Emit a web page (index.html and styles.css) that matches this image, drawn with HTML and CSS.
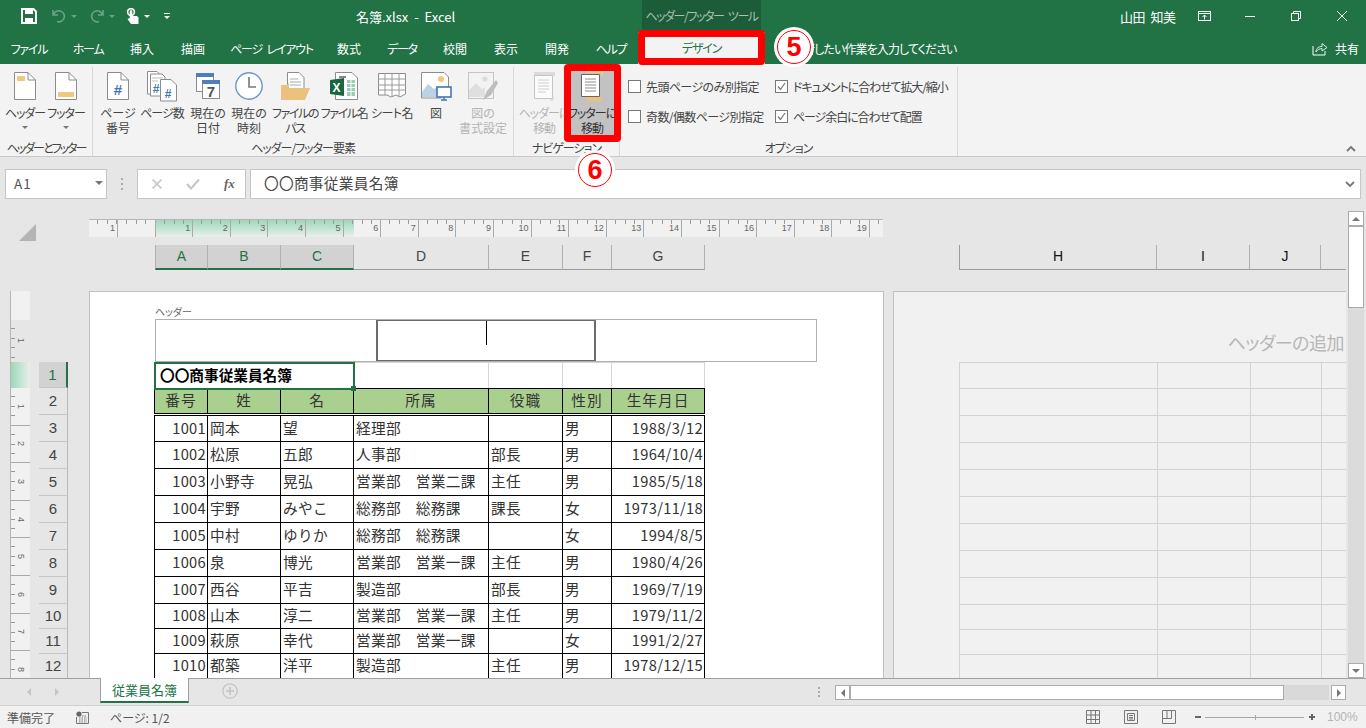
FILE: index.html
```html
<!DOCTYPE html>
<html lang="ja">
<head>
    <meta charset="UTF-8">
    <title>名簿.xlsx - Excel</title>
    <link rel="stylesheet" href="styles.css">
</head>
<body>
<div class="app">
    <!-- title bar -->
    <header class="titlebar">
        <div class="qat">
            <svg class="qat-save" width="16" height="16" viewBox="0 0 16 16"><path d="M1 1H12.5L15 3.5V15H1Z" fill="none" stroke="#fff" stroke-width="2"/><rect x="4" y="1" width="8" height="5" fill="#fff"/><rect x="4" y="10" width="8" height="5" fill="#fff"/></svg>
            <svg class="qat-undo" width="14" height="14" viewBox="0 0 14 14"><path d="M1 1V6H6M1.5 6A5.5 5.5 0 1 1 5 12.5" fill="none" stroke="#6aa287" stroke-width="1.6"/></svg>
            <span class="qat-caret dim"></span>
            <svg class="qat-redo" width="14" height="14" viewBox="0 0 14 14"><path d="M13 1V6H8M12.5 6A5.5 5.5 0 1 0 9 12.5" fill="none" stroke="#6aa287" stroke-width="1.6"/></svg>
            <span class="qat-caret dim"></span>
            <svg class="qat-touch" width="13" height="17" viewBox="0 0 13 17"><circle cx="5" cy="4" r="3.4" fill="none" stroke="#fff" stroke-width="1.6"/><path d="M3.7 3.5a1.3 1.3 0 0 1 2.6 0V8H11l1.5 1.5V16H5L1.5 11 3.7 10Z" fill="#fff"/></svg>
            <span class="qat-caret"></span>
            <svg class="qat-more" width="8" height="8" viewBox="0 0 8 8"><path d="M1 1.5H7" stroke="#fff"/><path d="M1 4H7L4 7Z" fill="#fff"/></svg>
        </div>
        <div class="doc-title">名簿.xlsx&nbsp; - &nbsp;Excel</div>
        <div class="context-title">ヘッダー/フッター ツール</div>
        <div class="user">山田 知美</div>
        <div class="win-btns">
            <svg width="46" height="14" viewBox="0 0 46 14"><g fill="none" stroke="#fff"><rect x="17.5" y="2.5" width="12" height="9"/><path d="M17.5 4.5H29.5M23.5 10.5V6M21.5 8L23.5 6L25.5 8"/></g></svg>
            <svg width="46" height="14" viewBox="0 0 46 14"><path d="M18 7.5H28" stroke="#fff"/></svg>
            <svg width="46" height="14" viewBox="0 0 46 14"><g fill="none" stroke="#fff"><rect x="18.5" y="4.5" width="7" height="7"/><path d="M20.5 4.5V2.5H27.5V9.5H25.5"/></g></svg>
            <svg width="46" height="14" viewBox="0 0 46 14"><path d="M18 2L28 12M28 2L18 12" stroke="#fff" fill="none"/></svg>
        </div>
    </header>

    <!-- tab row -->
    <nav class="tabs">
        <span class="tab kana tab-file">ファイル</span>
        <span class="tab kana tab-home">ホーム</span>
        <span class="tab tab-insert">挿入</span>
        <span class="tab tab-draw">描画</span>
        <span class="tab kana tab-layout">ページ レイアウト</span>
        <span class="tab tab-formula">数式</span>
        <span class="tab kana tab-data">データ</span>
        <span class="tab tab-review">校閲</span>
        <span class="tab tab-view">表示</span>
        <span class="tab tab-dev">開発</span>
        <span class="tab kana tab-help">ヘルプ</span>
        <span class="tab kana tab-design">デザイン</span>
        <span class="tell-me">実行したい作業を入力してください</span>
        <span class="share">
            <svg width="16" height="15" viewBox="0 0 16 15"><path d="M1 5V14H13V10" fill="none" stroke="#fff"/><path d="M4 11C4 7 7 5.5 10 5.5V2.5L15 6.5L10 10V7.5C8 7.5 5.5 8.5 4 11Z" fill="none" stroke="#e3efe8"/></svg>
            共有
        </span>
    </nav>

    <!-- ribbon -->
    <section class="ribbon">
        <div class="group group-hf">
            <div class="buttons">
                <div class="btn w40">
                    <svg width="32" height="32" viewBox="0 0 32 32"><path d="M5.5 2.5H19L26.5 10V29.5H5.5Z" fill="#fff" stroke="#8c8c8c"/><path d="M19 2.5V10H26.5" fill="none" stroke="#8c8c8c"/><rect x="8" y="6" width="8" height="5" fill="#f0c77e"/></svg>
                    <span class="btn-label tight">ヘッダー</span><i class="caret"></i>
                </div>
                <div class="btn w42">
                    <svg width="32" height="32" viewBox="0 0 32 32"><path d="M5.5 2.5H19L26.5 10V29.5H5.5Z" fill="#fff" stroke="#8c8c8c"/><path d="M19 2.5V10H26.5" fill="none" stroke="#8c8c8c"/><rect x="8" y="22" width="16" height="5" fill="#f0c77e"/></svg>
                    <span class="btn-label tight">フッター</span><i class="caret"></i>
                </div>
            </div>
            <div class="group-label">ヘッダーとフッター</div>
        </div>
        <div class="group group-items">
            <div class="buttons">
                <div class="btn w36">
                    <svg width="32" height="32" viewBox="0 0 32 32"><path d="M5.5 2.5H19L26.5 10V29.5H5.5Z" fill="#fff" stroke="#8c8c8c"/><path d="M19 2.5V10H26.5" fill="none" stroke="#8c8c8c"/><text x="16" y="25" class="icon-text" fill="#3f76b5">#</text></svg>
                    <span class="btn-label">ページ<br>番号</span>
                </div>
                <div class="btn w52">
                    <svg width="32" height="32" viewBox="0 0 32 32"><path d="M1.5 1.5H11L14 4.5V24H1.5Z" fill="#fff" stroke="#8c8c8c"/><path d="M4.5 4H16L19 7V26H4.5Z" fill="#fff" stroke="#8c8c8c"/><path d="M6 8H17M6 11H12" stroke="#bbb"/><text x="10" y="23" class="icon-text-sm" fill="#3f76b5">#</text><path d="M14.5 9.5H25L30.5 15V31H14.5Z" fill="#fff" stroke="#8c8c8c"/><text x="22" y="28" class="icon-text-sm" fill="#3f76b5">#</text></svg>
                    <span class="btn-label tight">ページ数</span>
                </div>
                <div class="btn w40">
                    <svg width="32" height="32" viewBox="0 0 32 32"><rect x="4.5" y="3.5" width="17" height="18" fill="#fff" stroke="#8c8c8c"/><rect x="4" y="3" width="18" height="4" fill="#4e7fb8"/><rect x="10.5" y="10.5" width="17" height="18" fill="#fff" stroke="#8c8c8c"/><rect x="10" y="10" width="18" height="4" fill="#4e7fb8"/><text x="19" y="27" class="icon-text" fill="#555">7</text></svg>
                    <span class="btn-label">現在の<br>日付</span>
                </div>
                <div class="btn w42">
                    <svg width="32" height="32" viewBox="0 0 32 32"><circle cx="16" cy="16" r="13.2" fill="#fff" stroke="#6b98cc" stroke-width="1.4"/><path d="M16 7V17H23" fill="none" stroke="#777" stroke-width="1.6"/></svg>
                    <span class="btn-label">現在の<br>時刻</span>
                </div>
                <div class="btn w50">
                    <svg width="32" height="32" viewBox="0 0 32 32"><path d="M8.5 2.5H20L25 7.5V20H8.5Z" fill="#fff" stroke="#8c8c8c"/><path d="M11 9H19M11 12H22M11 15H22" stroke="#aaa"/><path d="M2 30V15H8L10 13V18H31L26 30Z" fill="#ebc17f"/></svg>
                    <span class="btn-label tighter">ファイルの<br>パス</span>
                </div>
                <div class="btn w48">
                    <svg width="32" height="32" viewBox="0 0 32 32"><path d="M7.5 2.5H24L29.5 8V29.5H7.5Z" fill="#fff" stroke="#8c8c8c"/><path d="M11 7H18" stroke="#888" stroke-width="2"/><rect x="19" y="10" width="8" height="16" fill="#9ccdb1"/><path d="M19 13.5H27M19 17.5H27M19 21.5H27M23 10V26" stroke="#fff"/><path d="M2 10L16 8V26L2 24Z" fill="#17683f"/><text x="8.5" y="21.5" class="icon-text-sm" fill="#fff">X</text></svg>
                    <span class="btn-label tighter">ファイル名</span>
                </div>
                <div class="btn w48">
                    <svg width="32" height="32" viewBox="0 0 32 32"><path d="M2.5 3.5H29.5V24L24 27L20 25L15 27L11 25H2.5Z" fill="#fff" stroke="#8c8c8c"/><path d="M2.5 9H29.5M2.5 15H29.5M2.5 20H29.5M9 3.5V25M16 3.5V26M23 3.5V26" stroke="#9a9a9a" fill="none"/></svg>
                    <span class="btn-label tight-sm">シート名</span>
                </div>
                <div class="btn w40">
                    <svg width="32" height="32" viewBox="0 0 32 32"><path d="M1.5 2.5H24L28.5 7V19H21V28H1.5Z" fill="#fff" stroke="#8c8c8c"/><circle cx="21" cy="9" r="3" fill="#f0c77e"/><path d="M2 27V22L8 14L14 19L18 16V27Z" fill="#bcd0e6"/><rect x="17" y="17" width="14" height="10" fill="#fff" stroke="#3f76b5" stroke-width="1.6"/><path d="M21 30H27M24 27V30" stroke="#3f76b5" stroke-width="1.4"/></svg>
                    <span class="btn-label">図</span>
                </div>
                <div class="btn w54 off">
                    <svg width="32" height="32" viewBox="0 0 32 32"><rect x="1.5" y="2.5" width="25" height="26" fill="#f3f3f3" stroke="#c4c4c4"/><circle cx="18" cy="9" r="2.6" fill="#dcdcdc"/><path d="M2 27V20L9 13L15 19L18 17V27Z" fill="#dfdfdf"/><path d="M29 10L20 21L16 30L24 25L31 13Z" fill="#bdbdbd"/></svg>
                    <span class="btn-label">図の<br>書式設定</span>
                </div>
            </div>
            <div class="group-label">ヘッダー/フッター要素</div>
        </div>
        <div class="group group-nav">
            <div class="buttons">
                <div class="btn w50 off">
                    <svg width="32" height="32" viewBox="0 0 32 32"><rect x="6" y="2" width="21" height="4" fill="#dcdcdc"/><path d="M6.5 5.5H24.5V28.5H6.5Z" fill="#fbfbfb" stroke="#c4c4c4"/><path d="M10 10H21M10 13H21M10 16H21M10 19H21M10 22H18" stroke="#d0d0d0"/><path d="M25 27V30H22" stroke="#d0d0d0" fill="none"/></svg>
                    <span class="btn-label tight">ヘッダーに<br>移動</span>
                </div>
                <div class="btn w46 active">
                    <svg width="32" height="32" viewBox="0 0 32 32"><path d="M10 2H26V6" fill="none" stroke="#e6c98f" stroke-width="2"/><path d="M5.5 4.5H23.5V26.5H5.5Z" fill="#fff" stroke="#666"/><path d="M9 9H20M9 12H20M9 15H20M9 18H20M9 21H20" stroke="#8c8c8c"/><rect x="10" y="27" width="16" height="4" fill="#eac27f"/></svg>
                    <span class="btn-label tight">フッターに<br>移動</span>
                </div>
            </div>
            <div class="group-label">ナビゲーション</div>
        </div>
        <div class="group group-options">
            <div class="options">
                <div class="option-col col-left">
                    <label class="option"><span class="check"></span>先頭ページのみ別指定</label>
                    <label class="option"><span class="check"></span>奇数/偶数ページ別指定</label>
                </div>
                <div class="option-col col-right">
                    <label class="option"><span class="check"><svg width="11" height="11" viewBox="0 0 11 11"><path d="M2 5.5L4.5 8.5L9 2" fill="none" stroke="#777" stroke-width="1.2"/></svg></span>ドキュメントに合わせて拡大/縮小</label>
                    <label class="option"><span class="check"><svg width="11" height="11" viewBox="0 0 11 11"><path d="M2 5.5L4.5 8.5L9 2" fill="none" stroke="#777" stroke-width="1.2"/></svg></span>ページ余白に合わせて配置</label>
                </div>
            </div>
            <div class="group-label">オプション</div>
        </div>
        <svg class="collapse" width="10" height="7" viewBox="0 0 10 7"><path d="M1 6L5 2L9 6" fill="none" stroke="#777" stroke-width="1.8"/></svg>
    </section>

    <!-- formula bar -->
    <section class="formula-bar">
        <div class="name-box">A1<i class="name-caret"></i></div>
        <div class="grip"></div>
        <div class="fx-box">
            <svg width="12" height="12" viewBox="0 0 12 12"><path d="M1.5 1.5L10.5 10.5M10.5 1.5L1.5 10.5" stroke="#c4c4c4" stroke-width="1.6"/></svg>
            <svg width="14" height="12" viewBox="0 0 14 12"><path d="M1 6L5 10.5L13 1.5" fill="none" stroke="#c4c4c4" stroke-width="2"/></svg>
            <span class="fx">fx</span>
        </div>
        <div class="formula-input"><span class="formula-text">〇〇商事従業員名簿</span>
            <svg width="10" height="7" viewBox="0 0 10 7"><path d="M1 1L5 5L9 1" fill="none" stroke="#777" stroke-width="1.8"/></svg>
        </div>
    </section>

    <!-- sheet in page layout view -->
    <section class="sheet-view">
        <div class="canvas">
            <div class="ruler-row">
                <div class="corner"></div>
                <div class="ruler">
                    <span class="tick t-first">1</span><span class="tick"></span><span class="tick">1</span><span class="tick">2</span><span class="tick">3</span><span class="tick">4</span><span class="tick">5</span><span class="tick">6</span><span class="tick">7</span><span class="tick">8</span><span class="tick">9</span><span class="tick">10</span><span class="tick">11</span><span class="tick">12</span><span class="tick">13</span><span class="tick">14</span><span class="tick">15</span><span class="tick">16</span><span class="tick">17</span><span class="tick">18</span><span class="tick">19</span><span class="tick"></span>
                </div>
            </div>
            <div class="col-row">
                <span class="col sel w53">A</span><span class="col sel w73">B</span><span class="col sel w73">C</span><span class="col w135">D</span><span class="col w74">E</span><span class="col w49">F</span><span class="col w93">G</span>
                <span class="col-gap"></span>
                <span class="col w198 dark">H</span><span class="col w93 dark">I</span><span class="col w71 dark">J</span><span class="col w25"></span>
            </div>
            <div class="sheet-body">
                <div class="v-ruler">
                    <div class="v-margin"></div>
                    <div class="v-header"><span class="v-num">1</span></div>
                    <div class="v-green"></div>
                    <div class="v-rest">
                        <span class="v-num">1</span><span class="v-num">2</span><span class="v-num">3</span><span class="v-num">4</span><span class="v-num">5</span><span class="v-num">6</span><span class="v-num">7</span><span class="v-num">8</span>
                    </div>
                </div>
                <div class="row-heads">
                    <span class="rh sel h26">1</span><span class="rh">2</span><span class="rh">3</span><span class="rh">4</span><span class="rh">5</span><span class="rh">6</span><span class="rh">7</span><span class="rh">8</span><span class="rh">9</span><span class="rh h25">10</span><span class="rh h25">11</span><span class="rh h25">12</span>
                </div>
                <div class="page">
                    <div class="page-label">ヘッダー</div>
                    <div class="header-box">
                        <div class="hb-side"></div>
                        <div class="hb-center"><span class="text-caret"></span></div>
                        <div class="hb-side"></div>
                    </div>
                    <table class="roster">
                        <colgroup><col class="c53"><col class="c73"><col class="c73"><col class="c135"><col class="c74"><col class="c49"><col class="c93"></colgroup>
                        <tr class="r-title"><td colspan="3" class="a1">〇〇商事従業員名簿<i class="handle"></i></td><td></td><td></td><td></td><td></td></tr>
                        <tr class="r-head"><th>番号</th><th>姓</th><th>名</th><th>所属</th><th>役職</th><th>性別</th><th>生年月日</th></tr>
                        <tr><td class="num">1001</td><td>岡本</td><td>望</td><td>経理部</td><td></td><td>男</td><td class="num">1988/3/12</td></tr>
                        <tr><td class="num">1002</td><td>松原</td><td>五郎</td><td>人事部</td><td>部長</td><td>男</td><td class="num">1964/10/4</td></tr>
                        <tr><td class="num">1003</td><td>小野寺</td><td>晃弘</td><td>営業部　営業二課</td><td>主任</td><td>男</td><td class="num">1985/5/18</td></tr>
                        <tr><td class="num">1004</td><td>宇野</td><td>みやこ</td><td>総務部　総務課</td><td>課長</td><td>女</td><td class="num">1973/11/18</td></tr>
                        <tr><td class="num">1005</td><td>中村</td><td>ゆりか</td><td>総務部　総務課</td><td></td><td>女</td><td class="num">1994/8/5</td></tr>
                        <tr><td class="num">1006</td><td>泉</td><td>博光</td><td>営業部　営業一課</td><td>主任</td><td>男</td><td class="num">1980/4/26</td></tr>
                        <tr><td class="num">1007</td><td>西谷</td><td>平吉</td><td>製造部</td><td>部長</td><td>男</td><td class="num">1969/7/19</td></tr>
                        <tr class="r-short"><td class="num">1008</td><td>山本</td><td>淳二</td><td>営業部　営業一課</td><td>主任</td><td>男</td><td class="num">1979/11/2</td></tr>
                        <tr class="r-short"><td class="num">1009</td><td>萩原</td><td>幸代</td><td>営業部　営業一課</td><td></td><td>女</td><td class="num">1991/2/27</td></tr>
                        <tr class="r-short"><td class="num">1010</td><td>都築</td><td>洋平</td><td>製造部</td><td>主任</td><td>男</td><td class="num">1978/12/15</td></tr>
                    </table>
                </div>
                <div class="page-next">
                    <div class="add-header">ヘッダーの追加</div>
                    <table class="ghost">
                        <colgroup><col class="c198"><col class="c93"><col class="c71"><col class="c38"></colgroup>
                        <tr class="r-title"><td></td><td></td><td></td><td></td></tr>
                        <tr><td></td><td></td><td></td><td></td></tr>
                        <tr><td></td><td></td><td></td><td></td></tr>
                        <tr><td></td><td></td><td></td><td></td></tr>
                        <tr><td></td><td></td><td></td><td></td></tr>
                        <tr><td></td><td></td><td></td><td></td></tr>
                        <tr><td></td><td></td><td></td><td></td></tr>
                        <tr><td></td><td></td><td></td><td></td></tr>
                        <tr><td></td><td></td><td></td><td></td></tr>
                        <tr class="r-short"><td></td><td></td><td></td><td></td></tr>
                        <tr class="r-short"><td></td><td></td><td></td><td></td></tr>
                        <tr class="r-short"><td></td><td></td><td></td><td></td></tr>
                    </table>
                </div>
            </div>
        </div>
        <div class="v-scroll">
            <span class="sb-btn"><i class="tri-up"></i></span>
            <span class="sb-thumb"></span>
            <span class="sb-track"></span>
            <span class="sb-btn"><i class="tri-down"></i></span>
        </div>
    </section>

    <!-- sheet tabs -->
    <section class="sheet-tabs">
        <i class="nav-left"></i>
        <i class="nav-right"></i>
        <span class="sheet-tab">従業員名簿</span>
        <svg class="add-sheet" width="16" height="16" viewBox="0 0 16 16"><circle cx="8" cy="8" r="7.2" fill="none" stroke="#c4c4c4" stroke-width="1.3"/><path d="M8 4V12M4 8H12" stroke="#c4c4c4" stroke-width="1.6"/></svg>
        <div class="tabs-grip"></div>
        <div class="h-scroll">
            <span class="hb-btn"><i class="tri-left"></i></span>
            <span class="hb-thumb"></span>
            <span class="hb-track"></span>
            <span class="hb-btn"><i class="tri-right"></i></span>
        </div>
    </section>

    <!-- status bar -->
    <footer class="statusbar">
        <span class="st-ready">準備完了</span>
        <svg class="st-macro" width="13" height="13" viewBox="0 0 13 13"><circle cx="3" cy="3" r="2.6" fill="#666"/><path d="M6 1.5H12.5V12.5H.5V6" fill="none" stroke="#777"/><path d="M3 7H11M3 9H11M3 11H11M6 5H11" stroke="#777" stroke-dasharray="1.5 1"/></svg>
        <span class="st-page">ページ: 1/2</span>
        <svg class="st-normal" width="14" height="14" viewBox="0 0 14 14"><path d="M.5.5H13.5V13.5H.5ZM.5 5H13.5M.5 9.5H13.5M5 .5V13.5M9.5 .5V13.5" fill="none" stroke="#777"/></svg>
        <svg class="st-layout" width="14" height="14" viewBox="0 0 14 14"><path d="M.5.5H13.5V13.5H.5ZM3.5 3.5H10.5V10.5H3.5ZM5 5.5H9M5 7.5H9M5 9H9" fill="none" stroke="#777"/></svg>
        <svg class="st-break" width="14" height="14" viewBox="0 0 14 14"><path d="M.5.5H13.5V13.5H.5ZM.5 8.5H9.5V.5M5 .5V8.5" fill="none" stroke="#777"/></svg>
        <div class="zoom">
            <i class="z-minus"></i>
            <span class="z-track"><i class="z-mark"></i></span>
            <i class="z-plus"></i>
            <span class="z-text">100%</span>
        </div>
    </footer>

    <!-- red annotations from the article -->
    <div class="mark mark-tab"></div>
    <div class="mark mark-btn"></div>
    <div class="badge badge-5"><span>5</span></div>
    <div class="badge badge-6"><span>6</span></div>
</div>
</body>
</html>
```

FILE: styles.css
```css
* {
    box-sizing: border-box;
}
html, body {
    margin: 0;
    padding: 0;
}
body {
    width: 1366px;
    height: 728px;
    overflow: hidden;
    font-family: "Noto Sans CJK JP", "Noto Sans", sans-serif;
    font-feature-settings: "palt";
    font-size: 12px;
    color: #444;
}
.app {
    position: relative;
    width: 1366px;
    height: 728px;
    overflow: hidden;
    display: flex;
    flex-direction: column;
    background-color: #e6e6e6;
}
.icon-text, .icon-text-sm {
    font-family: "Liberation Sans", sans-serif;
    font-weight: bold;
    text-anchor: middle;
}
.icon-text {
    font-size: 15px;
}
.icon-text-sm {
    font-size: 12px;
}

/* title bar */
.titlebar {
    height: 32px;
    display: flex;
    align-items: center;
    background-color: #217346;
    color: #fff;
}
.qat {
    width: 356px;
    display: flex;
    align-items: center;
    padding-left: 21px;
    flex: none;
}
.qat-undo {
    margin-left: 15px;
}
.qat-redo {
    margin-left: 13px;
}
.qat-touch {
    margin-left: 11px;
}
.qat-caret {
    margin-left: 5px;
    border-left: 3px solid transparent;
    border-right: 3px solid transparent;
    border-top: 3px solid #fff;
}
.qat-caret.dim {
    border-top-color: #6aa287;
}
.qat-more {
    margin-left: 13px;
}
.doc-title {
    width: 286px;
    flex: none;
    font-size: 13px;
}
.context-title {
    width: 119px;
    height: 32px;
    flex: none;
    background-color: #1d5c39;
    color: #a6c2b2;
    text-align: center;
    line-height: 32px;
    white-space: nowrap;
    letter-spacing: -1.4px;
    word-spacing: 3px;
}
.user {
    margin-left: 359px;
    width: 61px;
    flex: none;
    font-size: 13px;
    letter-spacing: -.5px;
    word-spacing: 3px;
}
.win-btns {
    display: flex;
    flex: none;
    width: 185px;
}

/* tabs */
.tabs {
    height: 32px;
    display: flex;
    align-items: center;
    background-color: #217346;
    color: #fff;
    position: relative;
}
.tab {
    flex: none;
    text-align: center;
    white-space: nowrap;
}
.tab.kana {
    letter-spacing: -1.2px;
    word-spacing: 3px;
}
.tab-file { margin-left: 9px; width: 40px; }
.tab-home { margin-left: 21px; width: 36px; }
.tab-insert { margin-left: 18px; width: 36px; }
.tab-draw { margin-left: 15px; width: 36px; }
.tab-layout { margin-left: 18px; width: 85px; }
.tab-formula { margin-left: 17px; width: 36px; }
.tab-data { margin-left: 17px; width: 36px; }
.tab-review { margin-left: 17px; width: 36px; }
.tab-view { margin-left: 15px; width: 36px; }
.tab-dev { margin-left: 15px; width: 36px; }
.tab-help { margin-left: 18px; width: 36px; }
.tab-design {
    margin-left: 9px;
    width: 127px;
    height: 32px;
    line-height: 32px;
    background-color: #f3f3f3;
    color: #217346;
}
.tell-me {
    margin-left: 27px;
    white-space: nowrap;
    flex: none;
    letter-spacing: -.9px;
}
.share {
    margin-left: auto;
    margin-right: 7px;
    display: flex;
    align-items: center;
    gap: 7px;
}

/* ribbon */
.ribbon {
    height: 93px;
    display: flex;
    position: relative;
    background-color: #f3f3f3;
    border-bottom: 1px solid #c9c9c9;
}
.group {
    height: 89px;
    margin-top: 3px;
    display: flex;
    flex-direction: column;
    justify-content: space-between;
    border-right: 1px solid #d8d8d8;
    flex: none;
}
.group-hf {
    width: 93px;
    padding-left: 5px;
}
.group-items {
    width: 421px;
    padding-left: 7px;
}
.group-nav {
    width: 106px;
    padding-left: 5px;
}
.group-options {
    width: 338px;
    padding-left: 8px;
}
.group-label {
    text-align: center;
    line-height: 18px;
    height: 17px;
    white-space: nowrap;
    color: #444;
    letter-spacing: -1px;
}
.group-hf .group-label {
    margin-left: -5px;
    letter-spacing: -2px;
}
.group-items .group-label {
    margin-left: -7px;
}
.group-nav .group-label {
    margin-left: -5px;
}
.group-options .group-label {
    margin-left: -8px;
}
.tight {
    letter-spacing: -1px;
}
.tighter {
    letter-spacing: -1.4px;
}
.tight-sm {
    letter-spacing: -.5px;
}
.buttons {
    display: flex;
}
.btn {
    height: 68px;
    padding-top: 3px;
    flex: none;
    display: flex;
    flex-direction: column;
    align-items: center;
    text-align: center;
}
.btn svg {
    flex: none;
    margin-bottom: 3px;
}
.btn-label {
    line-height: 15px;
    white-space: nowrap;
}
.btn.off {
    color: #b4b4b4;
}
.btn.active {
    background-color: #c2c2c2;
    color: #333;
}
.caret {
    margin-top: 6px;
    border-left: 3px solid transparent;
    border-right: 3px solid transparent;
    border-top: 3px solid #777;
}
.w36 { width: 36px; }
.w40 { width: 40px; }
.w42 { width: 42px; }
.w46 { width: 46px; }
.w48 { width: 48px; }
.w50 { width: 50px; }
.w52 { width: 52px; }
.w54 { width: 54px; }

.options {
    display: flex;
    padding-top: 11px;
}
.option-col {
    display: flex;
    flex-direction: column;
    gap: 14px;
}
.col-left {
    width: 147px;
    letter-spacing: -.6px;
}
.col-right {
    letter-spacing: -1.1px;
}
.option {
    display: flex;
    align-items: center;
    height: 16px;
    white-space: nowrap;
    gap: 5px;
}
.check {
    width: 13px;
    height: 13px;
    border: 1px solid #777;
    background-color: #fff;
    display: flex;
    align-items: center;
    justify-content: center;
}
.collapse {
    position: absolute;
    right: 10px;
    top: 81px;
}

/* formula bar */
.formula-bar {
    height: 48px;
    padding: 12px 5px 0;
    display: flex;
    align-items: flex-start;
    background-color: #e6e6e6;
}
.name-box {
    width: 102px;
    height: 30px;
    padding-left: 8px;
    line-height: 27px;
    font-size: 13.5px;
    letter-spacing: 1px;
    background-color: #fff;
    border: 1px solid #c6c6c6;
    position: relative;
    color: #555;
}
.name-caret {
    position: absolute;
    right: 3px;
    top: 11px;
    border-left: 4px solid transparent;
    border-right: 4px solid transparent;
    border-top: 4px solid #777;
}
.grip {
    width: 2px;
    height: 12px;
    margin: 9px 14px 0 14px;
    background: repeating-linear-gradient(#aaa 0 2px, transparent 2px 5px);
}
.fx-box {
    width: 109px;
    height: 30px;
    display: flex;
    align-items: center;
    gap: 23px;
    padding-left: 13px;
    background-color: #fff;
    border: 1px solid #c6c6c6;
}
.fx {
    font-family: "Liberation Serif", serif;
    font-style: italic;
    font-weight: bold;
    font-size: 13px;
    color: #666;
    margin-left: 1px;
}
.formula-input {
    flex: 1;
    height: 30px;
    margin-left: 4px;
    padding: 0 5px 0 13px;
    display: flex;
    align-items: center;
    justify-content: space-between;
    background-color: #fff;
    border: 1px solid #c6c6c6;
    font-size: 14.67px;
    font-feature-settings: normal;
    color: #444;
}
.formula-text {
    letter-spacing: .3px;
    margin-top: -4px;
}

/* sheet view */
.sheet-view {
    height: 473px;
    display: flex;
    background-color: #e6e6e6;
}
.canvas {
    width: 1346px;
    flex: none;
    overflow: hidden;
}
.ruler-row {
    display: flex;
    padding-top: 14px;
    height: 32px;
}
.corner {
    width: 17px;
    height: 17px;
    margin-left: 19px;
    margin-top: 5px;
    background-color: #b4b4b4;
    clip-path: polygon(100% 0, 100% 100%, 0 100%);
    flex: none;
}
.ruler {
    margin-left: 53px;
    width: 794px;
    height: 18px;
    flex: none;
    display: flex;
    overflow: hidden;
    border-top: 1px solid #b5b5b5;
    background: linear-gradient(#9dd8b9, #e9efec) 67px 0 / 198px 100% no-repeat, #f1f1f1;
}
.tick {
    width: 37.6px;
    flex: none;
    text-align: right;
    padding-right: 2px;
    font-size: 9px;
    line-height: 17px;
    color: #666;
    font-family: "Liberation Sans", sans-serif;
    border-right: 1px solid #aaa;
    background: repeating-linear-gradient(90deg, transparent 0 8.4px, #999 8.4px 9.4px) 0 0 / 100% 4px no-repeat;
}
.t-first {
    width: 29px;
}
.col-row {
    display: flex;
    margin-top: 8px;
    padding-left: 155px;
    height: 25px;
}
.col {
    flex: none;
    height: 25px;
    line-height: 23px;
    text-align: center;
    font-size: 14px;
    font-family: "Liberation Sans", sans-serif;
    border-right: 1px solid #b0b0b0;
    border-bottom: 1px solid #9c9c9c;
    color: #444;
}
.col.sel {
    background-color: #d2d2d2;
    color: #217346;
    border-bottom: 2px solid #217346;
}
.col.dark {
    color: #111;
}
.col-gap {
    width: 255px;
    flex: none;
    border-right: 1px solid #9c9c9c;
}
.col.w53 { width: 53px; border-left: 1px solid #b0b0b0; }
.col.w73 { width: 73px; }
.col.w135 { width: 135px; }
.col.w74 { width: 74px; }
.col.w49 { width: 49px; }
.col.w93 { width: 93px; }
.col.w198 { width: 197px; }
.col.w71 { width: 71px; }
.col.w25 { width: 25px; border-right: none; }

.sheet-body {
    display: flex;
    margin-top: 21px;
    height: 387px;
}
.v-ruler {
    width: 20px;
    margin-left: 10px;
    flex: none;
    display: flex;
    flex-direction: column;
    border-left: 1px solid #b5b5b5;
}
.v-margin {
    height: 29px;
    background-color: #f1f1f1;
}
.v-header {
    height: 42px;
    display: flex;
    align-items: center;
    justify-content: center;
}
.v-green {
    height: 26px;
    background: linear-gradient(90deg, #9dd8b9, #e9efec);
}
.v-rest {
    flex: 1;
    background-color: #f1f1f1;
    overflow: hidden;
}
.v-num {
    display: flex;
    align-items: center;
    justify-content: center;
    writing-mode: vertical-rl;
    font-size: 9px;
    color: #666;
    font-family: "Liberation Sans", sans-serif;
    height: 37.6px;
    width: 19px;
    border-bottom: 1px solid #aaa;
    background: repeating-linear-gradient(transparent 0 8.4px, #999 8.4px 9.4px) 0 0 / 4px 100% no-repeat;
}
.v-header .v-num {
    height: 42px;
    border-bottom: none;
}
.row-heads {
    width: 29px;
    margin-left: 9px;
    margin-top: 71px;
    flex: none;
    display: flex;
    flex-direction: column;
}
.rh {
    height: 27px;
    flex: none;
    text-align: center;
    line-height: 26px;
    font-size: 15px;
    font-family: "Liberation Sans", sans-serif;
    color: #444;
    border-right: 1px solid #b8b8b8;
    border-bottom: 1px solid #c6c6c6;
}
.rh.sel {
    background-color: #d2d2d2;
    color: #217346;
    border-right: 2px solid #217346;
}
.rh.h26 { height: 26px; }
.rh.h25 { height: 25px; line-height: 24px; }

.page {
    width: 795px;
    margin-left: 21px;
    flex: none;
    padding-left: 65px;
    overflow: hidden;
    background-color: #fff;
    border-top: 1px solid #c0c0c0;
    border-left: 1px solid #c0c0c0;
    border-right: 1px solid #c0c0c0;
}
.page-label {
    height: 27px;
    font-size: 10px;
    line-height: 12px;
    padding-top: 14px;
    color: #666;
}
.header-box {
    width: 662px;
    height: 43px;
    display: flex;
    border: 1px solid #b0b0b0;
}
.hb-side {
    flex: 1;
}
.hb-center {
    width: 220px;
    display: flex;
    justify-content: center;
    border: 2px solid #6b6b6b;
    border-top-width: 1px;
    border-bottom-width: 1px;
}
.text-caret {
    width: 1px;
    height: 24px;
    background-color: #000;
}
table {
    border-collapse: collapse;
    table-layout: fixed;
}
.roster {
    width: 550px;
    margin-left: -1px;
    font-size: 14.67px;
    font-feature-settings: normal;
    letter-spacing: .3px;
    color: #333;
}
.c53 { width: 53px; }
.c73 { width: 73px; }
.c135 { width: 135px; }
.c74 { width: 74px; }
.c49 { width: 49px; }
.c93 { width: 93px; }
.c198 { width: 198px; }
.c71 { width: 71px; }
.c38 { width: 38px; }
.roster td, .roster th {
    height: 27px;
    padding: 0 2px 2px;
    border: 1px solid #000;
    white-space: nowrap;
    overflow: hidden;
    line-height: 20px;
}
.roster th {
    height: 26px;
    font-weight: normal;
    text-align: center;
    background-color: #a9d08e;
    border-bottom: 3px double #000;
    letter-spacing: 1px;
}
.roster td.num {
    text-align: right;
    padding-right: 1px;
}
.roster .r-title td {
    height: 26px;
    border: 1px solid #d6d6d6;
    border-bottom-color: #000;
}
.roster .r-short td {
    height: 25px;
}
.roster .r-title td.a1 {
    position: relative;
    overflow: visible;
    padding-left: 5px;
    font-weight: bold;
    letter-spacing: 0;
    color: #000;
    outline: 2px solid #217346;
    outline-offset: -1px;
}
.handle {
    position: absolute;
    right: -3px;
    bottom: -3px;
    width: 5px;
    height: 5px;
    background-color: #217346;
    border: 1px solid #217346;
}

.page-next {
    width: 453px;
    margin-left: 9px;
    flex: none;
    padding-left: 65px;
    overflow: hidden;
    background-color: #f1f1f1;
    border-top: 1px solid #c0c0c0;
    border-left: 1px solid #c0c0c0;
}
.add-header {
    height: 70px;
    width: 388px;
    margin-left: -3px;
    text-align: right;
    padding-top: 36px;
    line-height: 28px;
    font-size: 18px;
    letter-spacing: -.5px;
    white-space: nowrap;
    color: #b7b7b7;
}
.ghost {
    width: 400px;
}
.ghost td {
    height: 27px;
    border: 1px solid #d2d2d2;
}
.ghost .r-title td { height: 26px; }
.ghost .r-short td { height: 25px; }

/* scrollbars */
.v-scroll {
    width: 20px;
    flex: none;
    padding: 6px 2px 0;
    display: flex;
    flex-direction: column;
}
.sb-btn {
    height: 15px;
    flex: none;
    background-color: #fff;
    border: 1px solid #ababab;
    display: flex;
    align-items: center;
    justify-content: center;
}
.sb-thumb {
    height: 82px;
    flex: none;
    background-color: #fff;
    border: 1px solid #ababab;
}
.sb-track {
    flex: 1;
    background-color: #dbdbdb;
}
.tri-up {
    border-left: 4px solid transparent;
    border-right: 4px solid transparent;
    border-bottom: 4px solid #777;
}
.tri-down {
    border-left: 4px solid transparent;
    border-right: 4px solid transparent;
    border-top: 4px solid #777;
}
.tri-left {
    border-top: 4px solid transparent;
    border-bottom: 4px solid transparent;
    border-right: 4px solid #777;
}
.tri-right {
    border-top: 4px solid transparent;
    border-bottom: 4px solid transparent;
    border-left: 4px solid #777;
}

/* sheet tabs */
.sheet-tabs {
    height: 28px;
    display: flex;
    align-items: flex-start;
    background-color: #e6e6e6;
    border-top: 1px solid #a0a0a0;
    border-bottom: 1px solid #d0d0d0;
}
.nav-left, .nav-right {
    margin-top: 9px;
    border-top: 4px solid transparent;
    border-bottom: 4px solid transparent;
    flex: none;
}
.nav-left {
    margin-left: 27px;
    border-right: 4px solid #c4c4c4;
}
.nav-right {
    margin-left: 24px;
    border-left: 4px solid #c4c4c4;
}
.sheet-tab {
    width: 89px;
    height: 25px;
    margin-left: 41px;
    margin-top: -1px;
    flex: none;
    text-align: center;
    line-height: 24px;
    font-size: 13px;
    font-feature-settings: normal;
    color: #217346;
    background-color: #fff;
    border: 1px solid #a0a0a0;
    border-top: none;
    border-bottom: 2px solid #217346;
}
.add-sheet {
    margin-left: 33px;
    margin-top: 4px;
    flex: none;
}
.tabs-grip {
    width: 2px;
    height: 11px;
    margin: 8px 0 0 580px;
    flex: none;
    background: repeating-linear-gradient(#aaa 0 2px, transparent 2px 4px);
}
.h-scroll {
    width: 511px;
    height: 15px;
    margin: 6px 0 0 15px;
    flex: none;
    display: flex;
}
.hb-btn {
    width: 15px;
    flex: none;
    background-color: #fff;
    border: 1px solid #ababab;
    display: flex;
    align-items: center;
    justify-content: center;
}
.hb-thumb {
    width: 434px;
    flex: none;
    background-color: #fff;
    border: 1px solid #ababab;
}
.hb-track {
    flex: 1;
    background-color: #d9d9d9;
    margin-right: 2px;
}

/* status bar */
.statusbar {
    height: 22px;
    display: flex;
    align-items: center;
    background-color: #f1f1f1;
    color: #555;
}
.st-ready {
    margin-left: 7px;
    width: 69px;
    flex: none;
}
.st-macro {
    flex: none;
}
.st-page {
    margin-left: 21px;
    flex: none;
    width: 100px;
}
.st-normal {
    margin-left: 876px;
    flex: none;
}
.st-layout, .st-break {
    margin-left: 24px;
    flex: none;
}
.zoom {
    margin-left: 19px;
    display: flex;
    align-items: center;
    flex: none;
}
.z-minus {
    width: 6px;
    height: 2px;
    background-color: #666;
}
.z-track {
    width: 99px;
    height: 1px;
    margin: 0 5px 0 4px;
    background-color: #a8a8a8;
    position: relative;
}
.z-mark {
    position: absolute;
    left: 50px;
    top: -2px;
    width: 1px;
    height: 5px;
    background-color: #a8a8a8;
}
.z-plus {
    width: 6px;
    height: 6px;
    background: linear-gradient(#666, #666) center / 2px 100% no-repeat, linear-gradient(#666, #666) center / 100% 2px no-repeat;
}
.z-text {
    margin-left: 12px;
    color: #b4b4b4;
    font-family: "Liberation Sans", sans-serif;
    font-size: 12px;
}

/* annotations */
.mark {
    position: absolute;
    border: 7px solid #fe0000;
    border-radius: 4px;
}
.mark-tab {
    left: 638px;
    top: 30px;
    width: 127px;
    height: 35px;
}
.mark-btn {
    left: 564px;
    top: 64px;
    width: 57px;
    height: 78px;
}
.badge {
    position: absolute;
    width: 40px;
    height: 40px;
    border-radius: 50%;
    background-color: #fff;
    display: flex;
    align-items: center;
    justify-content: center;
}
.badge span {
    width: 34px;
    height: 34px;
    border-radius: 50%;
    border: 1px solid #fe0000;
    color: #fe0000;
    font-family: "Liberation Sans", sans-serif;
    font-weight: bold;
    font-size: 27px;
    line-height: 32px;
    text-align: center;
}
.badge-5 {
    left: 774px;
    top: 27px;
}
.badge-6 {
    left: 575px;
    top: 150px;
}
```
